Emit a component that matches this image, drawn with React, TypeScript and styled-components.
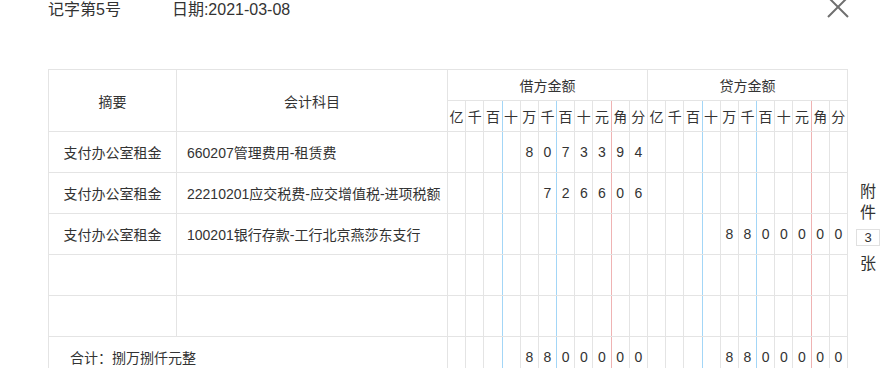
import styled, { createGlobalStyle } from "styled-components";

const GlobalStyle = createGlobalStyle`
  body {
    margin: 0;
    background: #fff;
    font-family: "Liberation Sans", "Noto Sans CJK SC", sans-serif;
    color: #333;
  }
`;

const UNITS = ["亿", "千", "百", "十", "万", "千", "百", "十", "元", "角", "分"];

const rows = [
  { summary: "支付办公室租金", account: "660207管理费用-租赁费", debit: "8073394", credit: "" },
  { summary: "支付办公室租金", account: "22210201应交税费-应交增值税-进项税额", debit: "726606", credit: "" },
  { summary: "支付办公室租金", account: "100201银行存款-工行北京燕莎东支行", debit: "", credit: "8800000" },
  { summary: "", account: "", debit: "", credit: "" },
  { summary: "", account: "", debit: "", credit: "" },
];

const total = { text: "合计：捌万捌仟元整", debit: "8800000", credit: "8800000" };

// which line sits on the right of a unit column
const lineAfter = (i: number) => (i === 2 || i === 5 ? "blue" : i === 8 ? "red" : "");

const toCells = (amount: string) => {
  const padded = amount.padStart(UNITS.length, " ");
  return padded.split("").map((c) => (c === " " ? "" : c));
};

function Amount({ value }: { value: string }) {
  return (
    <>
      {toCells(value).map((d, i) => (
        <DigitCell key={i} $line={lineAfter(i)}>
          {d}
        </DigitCell>
      ))}
    </>
  );
}

export default function App() {
  return (
    <Page>
      <GlobalStyle />
      <TopBar>
        <Title>记字第5号</Title>
        <Title>日期:2021-03-08</Title>
        <Close aria-label="关闭">
          <svg width="22" height="22" viewBox="0 0 22 22">
            <path d="M1 1 L21 21 M21 1 L1 21" stroke="#6f6f6f" strokeWidth="2" fill="none" />
          </svg>
        </Close>
      </TopBar>
      <Body>
        <Voucher>
          <colgroup>
            <col style={{ width: 128 }} />
            <col style={{ width: 271 }} />
            {Array.from({ length: 22 }).map((_, i) => (
              <col key={i} style={{ width: 200 / 11 }} />
            ))}
          </colgroup>
          <thead>
            <tr>
              <HeadCell rowSpan={2}>摘要</HeadCell>
              <HeadCell rowSpan={2}>会计科目</HeadCell>
              <HeadCell colSpan={11}>借方金额</HeadCell>
              <HeadCell colSpan={11}>贷方金额</HeadCell>
            </tr>
            <tr>
              {[...UNITS, ...UNITS].map((u, i) => (
                <UnitCell key={i} $line={lineAfter(i % 11)}>
                  {u}
                </UnitCell>
              ))}
            </tr>
          </thead>
          <tbody>
            {rows.map((r, i) => (
              <tr key={i}>
                <SummaryCell>{r.summary}</SummaryCell>
                <AccountCell>{r.account}</AccountCell>
                <Amount value={r.debit} />
                <Amount value={r.credit} />
              </tr>
            ))}
            <tr>
              <TotalCell colSpan={2}>{total.text}</TotalCell>
              <Amount value={total.debit} />
              <Amount value={total.credit} />
            </tr>
          </tbody>
        </Voucher>
        <Attach>
          <span>附</span>
          <span>件</span>
          <AttachCount>3</AttachCount>
          <AttachUnit>张</AttachUnit>
        </Attach>
      </Body>
    </Page>
  );
}

const Page = styled.div`
  width: 887px;
  height: 368px;
  overflow: hidden;
`;

const TopBar = styled.div`
  display: flex;
  align-items: flex-start;
  gap: 51px;
  padding-left: 48px;
  height: 20px;
`;

const Title = styled.span`
  font-size: 16px;
  line-height: 20px;
  color: #333;
`;

const Close = styled.div`
  margin-left: auto;
  margin-right: 38px;
  margin-top: -4px;
  width: 22px;
  height: 22px;
  cursor: pointer;
`;

const Body = styled.div`
  display: flex;
  align-items: flex-start;
  margin-top: 49px;
  padding-left: 48px;
`;

const Voucher = styled.table`
  border-collapse: collapse;
  table-layout: fixed;
  width: 800px;
  font-size: 14px;
  color: #333;

  td,
  th {
    border: 1px solid #e4e4e4;
    padding: 0;
    font-weight: normal;
  }
`;

const HeadCell = styled.th`
  height: 30px;
  text-align: center;
`;

const UnitCell = styled.th<{ $line: string }>`
  height: 30px;
  text-align: center;
  white-space: nowrap;
  border-right-color: ${(p) =>
    p.$line === "blue" ? "#a3d6f7" : p.$line === "red" ? "#efb3b3" : "#e4e4e4"} !important;
`;

const SummaryCell = styled.td`
  height: 40px;
  text-align: center;
`;

const AccountCell = styled.td`
  height: 40px;
  padding-left: 10px !important;
  white-space: nowrap;
  overflow: hidden;
`;

const DigitCell = styled.td<{ $line: string }>`
  height: 40px;
  text-align: center;
  border-right-color: ${(p) =>
    p.$line === "blue" ? "#a3d6f7" : p.$line === "red" ? "#efb3b3" : "#e4e4e4"} !important;
`;

const TotalCell = styled.td`
  height: 40px;
  padding-left: 21px !important;
  text-align: left;
`;

const Attach = styled.div`
  display: flex;
  flex-direction: column;
  align-items: center;
  width: 24px;
  margin-left: 8px;
  padding-top: 112px;
  font-size: 16px;
  line-height: 21px;
  color: #333;
`;

const AttachCount = styled.div`
  box-sizing: border-box;
  width: 24px;
  height: 17px;
  margin-top: 6px;
  border: 1px solid #e0e0e0;
  font-size: 13px;
  line-height: 15px;
  text-align: center;
`;

const AttachUnit = styled.span`
  margin-top: 7px;
`;
